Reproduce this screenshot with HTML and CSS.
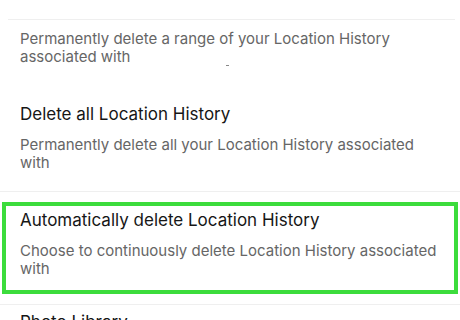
FILE: index.html
```html
<!DOCTYPE html>
<html>
<head>
<meta charset="utf-8">
<link rel="stylesheet" href="styles.css">
</head>
<body>
<div class="screen">
  <div class="sep sep-top"></div>
  <div class="row row-first">
    <p class="desc">Permanently delete a range of your Location History associated with</p>
    <span class="dash"></span>
  </div>
  <div class="row row-second">
    <h2 class="title">Delete all Location History</h2>
    <p class="desc">Permanently delete all your Location History associated with</p>
  </div>
  <div class="sep sep-mid"></div>
  <div class="row highlight">
    <h2 class="title">Automatically delete Location History</h2>
    <p class="desc">Choose to continuously delete Location History associated with</p>
  </div>
  <div class="sep sep-bottom"></div>
  <div class="row row-last">
    <h2 class="title">Photo Library</h2>
  </div>
</div>
</body>
</html>
```
FILE: styles.css
```css
html, body {
  margin: 0;
  padding: 0;
  background: #ffffff;
}
.screen {
  width: 460px;
  height: 320px;
  overflow: hidden;
  font-family: Inter, "Noto Sans", sans-serif;
  padding-top: 19px;
  box-sizing: border-box;
}
.sep {
  height: 1px;
  background: #efefef;
}
.sep-top {
  margin: 0 5px 0 8px;
}
.sep-mid {
  margin-top: 19px;
}
.sep-bottom {
  margin-top: 10px;
}
.row {
  padding: 0 20px;
  position: relative;
}
.row-first {
  padding-top: 10px;
}
.row-second {
  padding-top: 37px;
}
.title {
  margin: 0;
  font-size: 17px;
  line-height: 22px;
  font-weight: 400;
  color: #161616;
}
.desc {
  margin: 11px 0 0;
  font-size: 15px;
  line-height: 18px;
  color: #666666;
}
.row-first .desc {
  margin-top: 0;
}
.dash {
  position: absolute;
  left: 226px;
  top: 45px;
  width: 3px;
  height: 1px;
  background: #888;
}
.highlight {
  margin: 10px 2px 0;
  border: 4px solid #3cdc3c;
  padding: 3px 14px 12px;
}
.row-last {
  padding-top: 6px;
}
```
